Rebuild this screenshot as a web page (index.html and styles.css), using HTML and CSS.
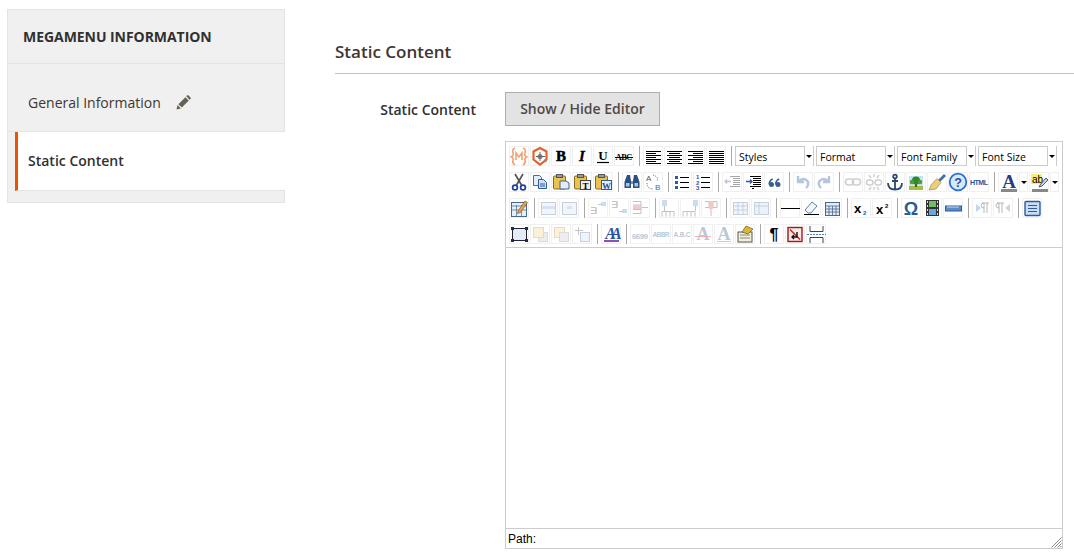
FILE: index.html
```html
<!DOCTYPE html>
<html lang="en">
<head>
    <meta charset="UTF-8">
    <title>Megamenu Information</title>
    <link rel="stylesheet" href="styles.css">
</head>
<body>
    <aside class="side">
        <h2 class="side-title">MEGAMENU INFORMATION</h2>
        <div class="side-item">
            General Information
            <svg class="pencil" viewBox="0 0 15 15"><path d="M0.5 14.500l1-4.400 3.400 3.400zM2.400 9.200l7-7 3.400 3.400-7 7zM10.300 1.300l1-1q.5-.4 1 0l2.400 2.400q.4.5 0 1l-1 1z" fill="#676056"/></svg>
        </div>
        <div class="side-item active">Static Content</div>
    </aside>

    <main class="main">
        <h3 class="section-title">Static Content</h3>
        <div class="field">
            <label class="field-label">Static Content</label>
            <div class="field-body">
                <button class="toggle">Show / Hide Editor</button>
                <div class="editor">
                    <div class="toolbar">
                        <div class="row">
                            <span class="btn"><svg viewBox="0 0 20 20"><g fill="none" stroke="#f4a070" stroke-width="1.600"><path d="M6 2Q3 3 4 7T1.500 10.500Q5 12 4 14.500T6 19"/><path d="M14 2Q17 3 16 7T18.500 10.500Q15 12 16 14.500T14 19"/><path d="M7 14V7l3 4 3-4v7"/></g></svg></span>
                            <span class="btn"><svg viewBox="0 0 20 20"><path d="M10 2l6.500 3.500v8L10 18.500l-6.500-5v-8z" fill="#fff" stroke="#e2622a" stroke-width="2.200"/><circle cx="10" cy="10.500" r="2.600" fill="#8a8a8a"/><path d="M10 6v9M6 10.500h9" stroke="#666"/><path d="M14 13l3 1-1 3z" fill="#888"/></svg></span>
                            <span class="btn"><svg viewBox="0 0 20 20"><text x="10" y="15" class="t-serif b" font-size="15" stroke="#000" stroke-width=".5" text-anchor="middle">B</text></svg></span>
                            <span class="btn"><svg viewBox="0 0 20 20"><text x="10" y="15" class="t-serif b i" font-size="15" stroke="#000" stroke-width=".3" text-anchor="middle">I</text></svg></span>
                            <span class="btn"><svg viewBox="0 0 20 20"><text x="10" y="13.500" class="t-serif b" font-size="13" text-anchor="middle">U</text><path d="M4 16.500h12" stroke="#000" stroke-width="1.200"/></svg></span>
                            <span class="btn"><svg viewBox="0 0 20 20"><text x="10" y="14" class="t-serif b" font-size="8.500" text-anchor="middle" textLength="17">ABC</text><path d="M1 11.500h18" stroke="#000"/></svg></span>
                            <i class="sep"></i>
                            <span class="btn"><svg viewBox="0 0 20 20"><path class="ln" d="M3 5.500h15M3 7.500h10M3 9.500h15M3 11.500h10M3 13.500h15M3 15.500h10M3 17.500h15"/></svg></span>
                            <span class="btn"><svg viewBox="0 0 20 20"><path class="ln" d="M3 5.500h15M5 7.500h11M3 9.500h15M5 11.500h11M3 13.500h15M5 15.500h11M3 17.500h15"/></svg></span>
                            <span class="btn"><svg viewBox="0 0 20 20"><path class="ln" d="M3 5.500h15M8 7.500h10M3 9.500h15M8 11.500h10M3 13.500h15M8 15.500h10M3 17.500h15"/></svg></span>
                            <span class="btn"><svg viewBox="0 0 20 20"><path class="ln" d="M3 5.500h15M3 7.500h15M3 9.500h15M3 11.500h15M3 13.500h15M3 15.500h15M3 17.500h15"/></svg></span>
                            <i class="sep"></i>
                            <div class="selects">
                                <span class="select">Styles</span>
                                <span class="select">Format</span>
                                <span class="select">Font Family</span>
                                <span class="select">Font Size</span>
                            </div>
                        </div>

                        <div class="row">
                            <span class="btn"><svg viewBox="0 0 20 20"><path d="M6 2l6.500 11M14 2L7.500 13" stroke="#555" stroke-width="1.700"/><g fill="none" stroke="#22409a" stroke-width="1.700"><circle cx="6" cy="15.500" r="2.400"/><circle cx="14" cy="15.500" r="2.400"/></g></svg></span>
                            <span class="btn"><svg viewBox="0 0 20 20"><path d="M3.500 3.500h6l2 2v8h-8z" fill="#e4eefa" stroke="#3a6eb0"/><path d="M8.500 7.500h5l3 3v6h-8z" fill="#cfe0f6" stroke="#2c5c9e"/><path d="M10 12h5M10 14h5" stroke="#2c5c9e"/></svg></span>
                            <span class="btn"><svg viewBox="0 0 20 20"><rect x="2.500" y="4" width="12" height="13" rx="1" fill="#e8c350" stroke="#8a6a20"/><rect x="5.500" y="2.500" width="6" height="3" fill="#999" stroke="#555"/><path d="M9 9h6l3 2v6H9z" fill="#e4eefa" stroke="#48607e"/></svg></span>
                            <span class="btn"><svg viewBox="0 0 20 20"><rect x="2.500" y="4" width="12" height="13" rx="1" fill="#e8c350" stroke="#8a6a20"/><rect x="5.500" y="2.500" width="6" height="3" fill="#999" stroke="#555"/><rect x="8.500" y="8.500" width="10" height="9" fill="#eee" stroke="#444"/><text x="13.500" y="16.500" class="t-serif b" font-size="9" text-anchor="middle">T</text></svg></span>
                            <span class="btn"><svg viewBox="0 0 20 20"><rect x="2.500" y="4" width="12" height="13" rx="1" fill="#e8c350" stroke="#8a6a20"/><rect x="5.500" y="2.500" width="6" height="3" fill="#999" stroke="#555"/><rect x="8.500" y="8.500" width="10" height="9" fill="#e4eefa" stroke="#2c5c9e"/><text x="13.500" y="16.500" class="t-serif b" font-size="9" fill="#1c4ea0" text-anchor="middle">W</text></svg></span>
                            <i class="sep"></i>
                            <span class="btn"><svg viewBox="0 0 20 20"><g fill="#2a4f80"><path d="M5 3h3l1 6v7H2.500v-6z"/><path d="M15 3h-3l-1 6v7h6.500v-6z"/></g><path d="M9 9h2v3H9z" fill="#7a95b8"/><path d="M4 11h3.500v3.500H4zM12.500 11H16v3.500h-3.500z" fill="#a8c4e6"/></svg></span>
                            <span class="btn"><svg viewBox="0 0 20 20"><text x="3" y="9" class="t-sans" font-size="8" fill="#555">A</text><text x="12" y="18" class="t-sans" font-size="8" fill="#2a70c8">B</text><path d="M10 3q6 2 4 6M4 11q0 6 6 6" fill="none" stroke="#2a70c8" stroke-dasharray="1 1"/></svg></span>
                            <i class="sep"></i>
                            <span class="btn"><svg viewBox="0 0 20 20"><path class="ln" d="M8 5.500h9M8 10.500h9M8 15.500h9"/><path d="M3 4h3v3H3zM3 9h3v3H3zM3 14h3v3H3z" fill="#2c5c9e"/></svg></span>
                            <span class="btn"><svg viewBox="0 0 20 20"><path class="ln" d="M8 5.500h9M8 10.500h9M8 15.500h9"/><g class="t-sans b" font-size="6" fill="#2456a4"><text x="3" y="7">1</text><text x="3" y="12.500">2</text><text x="3" y="18">3</text></g></svg></span>
                            <i class="sep"></i>
                            <span class="btn off"><svg viewBox="0 0 20 20"><path class="ln" d="M8 4.500h10M11 6.500h7M11 8.500h7M11 10.500h7M11 12.500h7M8 14.500h10"/><path d="M9 9.500H3m2-2l-2 2 2 2" fill="none" stroke="#2c5c9e" stroke-width="1.300"/></svg></span>
                            <span class="btn"><svg viewBox="0 0 20 20"><path class="ln" d="M7 4.500h11M10 6.500h8M10 8.500h8M10 10.500h8M10 12.500h8M7 14.500h11M9 16.500h2"/><path d="M3 9.500h6m-2-2l2 2-2 2" fill="none" stroke="#2c5c9e" stroke-width="1.300"/></svg></span>
                            <span class="btn"><svg viewBox="0 0 20 20"><g fill="#3a6090"><circle cx="7.500" cy="12.500" r="2.500"/><circle cx="14" cy="12.500" r="2.500"/></g><path d="M5.200 12.500q0-4 3.500-5.500M11.700 12.500q0-4 3.500-5.500" fill="none" stroke="#3a6090" stroke-width="1.700"/></svg></span>
                            <i class="sep"></i>
                            <span class="btn off"><svg viewBox="0 0 20 20"><path d="M5 4v6h6M5 10q6-6 10 0 1 3-2 6" fill="none" stroke="#2c5c9e" stroke-width="2.400"/></svg></span>
                            <span class="btn off"><svg viewBox="0 0 20 20"><path d="M15 4v6H9M15 10q-6-6-10 0-1 3 2 6" fill="none" stroke="#2c5c9e" stroke-width="2.400"/></svg></span>
                            <i class="sep"></i>
                            <span class="btn off"><svg viewBox="0 0 20 20"><g fill="none" stroke="#777" stroke-width="1.600"><rect x="2.500" y="7" width="8" height="6" rx="3"/><rect x="9.500" y="7" width="8" height="6" rx="3"/></g></svg></span>
                            <span class="btn off"><svg viewBox="0 0 20 20"><g fill="none" stroke="#777" stroke-width="1.400"><rect x="2.500" y="8" width="6.500" height="5" rx="2.500"/><rect x="11" y="8" width="6.500" height="5" rx="2.500"/><path d="M10 2v3M10 15v3M5 3l2 3M15 3l-2 3M5 18l2-3M15 18l-2-3"/></g></svg></span>
                            <span class="btn"><svg viewBox="0 0 20 20"><g fill="none" stroke="#2c4a70" stroke-width="1.800"><circle cx="10" cy="4.500" r="1.800"/><path d="M10 6v11.500M7 9h6M3 11q0 6.500 7 6.500t7-6.500"/></g></svg></span>
                            <span class="btn"><svg viewBox="0 0 20 20"><rect x="3" y="4" width="14" height="14" fill="#c8e0f4"/><path d="M3 14h14v4H3z" fill="#a0c040"/><path d="M9 10h2v5H9z" fill="#6a4a20"/><circle cx="10" cy="8.500" r="4" fill="#2f8a2a"/><circle cx="14" cy="10" r="2.200" fill="#48a030"/><circle cx="6" cy="10" r="2.200" fill="#48a030"/></svg></span>
                            <span class="btn"><svg viewBox="0 0 20 20"><path d="M11 8l6-6 2 2-6 6z" fill="#3f6fa8"/><path d="M10 6.500l4 4L9 17l-7 1 2-5z" fill="#e8cf78" stroke="#a88a38" stroke-width=".7"/></svg></span>
                            <span class="btn"><svg viewBox="0 0 20 20"><circle cx="10" cy="10" r="8.300" fill="#d8e8fa" stroke="#2a70c8" stroke-width="1.800"/><text x="10" y="14.500" class="t-sans b" font-size="12.500" fill="#1c52a8" text-anchor="middle">?</text></svg></span>
                            <span class="btn"><svg viewBox="0 0 20 20"><text x="10" y="12.500" class="t-sans b" font-size="7" fill="#25559a" text-anchor="middle" textLength="18">HTML</text></svg></span>
                            <i class="sep"></i>
                            <span class="btn"><svg viewBox="0 0 20 20"><text x="11" y="16" class="t-serif b" font-size="19" fill="#1f3f80" text-anchor="middle">A</text><path d="M3 17h16v3H3z" fill="#888"/></svg></span>
                            <span class="arrow"></span>
                            <span class="btn"><svg viewBox="0 0 20 20"><rect x="2" y="2" width="11" height="10" fill="#f6ec78"/><text x="3" y="10.500" class="t-sans" font-size="10">ab</text><path d="M11 13l6-7 2 2-6 6-3 1z" fill="#c8d8ea" stroke="#556"/><path d="M3 17h16v3H3z" fill="#888"/></svg></span>
                            <span class="arrow"></span>
                        </div>

                        <div class="row">
                            <span class="btn"><svg viewBox="0 0 20 20"><rect x="2.500" y="4.500" width="15" height="14" fill="#e6eef8" stroke="#47688f"/><path d="M3 8h14M3 12h14M7.500 7v11M12.500 7v11" stroke="#47688f" stroke-width=".7"/><path d="M9 13l7-10 2.500 1.500-7 10-3 1z" fill="#e8a050" stroke="#7a5020" stroke-width=".6"/></svg></span>
                            <i class="sep"></i>
                            <span class="btn off"><svg viewBox="0 0 20 20"><rect x="3.500" y="4.500" width="14" height="12" fill="#dce6f2" stroke="#5a7ca4"/><path d="M4 8h13v3H4z" fill="#8fb0d8"/></svg></span>
                            <span class="btn off"><svg viewBox="0 0 20 20"><rect x="3.500" y="4.500" width="14" height="12" fill="#dce6f2" stroke="#5a7ca4"/><path d="M8 8h5v3H8z" fill="#8fb0d8"/></svg></span>
                            <i class="sep"></i>
                            <span class="btn off"><svg viewBox="0 0 20 20"><g fill="none" stroke="#555"><path d="M3 9.500h5v3H3M3 15.500h5v-3M8 9.500v6"/><path d="M10 6.500h3"/></g><rect x="13" y="4" width="5" height="4" fill="#6e9ed6"/></svg></span>
                            <span class="btn off"><svg viewBox="0 0 20 20"><g fill="none" stroke="#555"><path d="M3 3.500h5v3H3M3 9.500h5v-3M8 3.500v6"/><path d="M10 13.500h3"/></g><rect x="13" y="11" width="5" height="4" fill="#6e9ed6"/></svg></span>
                            <span class="btn off"><svg viewBox="0 0 20 20"><g fill="none" stroke="#555"><path d="M3 3.500h8v12H3M3 7h8M3 11.500h8"/><path d="M12 9.500h6"/></g><rect x="3" y="7.500" width="9" height="3.500" fill="#e86060"/></svg></span>
                            <i class="sep"></i>
                            <span class="btn off"><svg viewBox="0 0 20 20"><g fill="none" stroke="#555"><path d="M3 18.500v-5h12v5M7 13.500v5M11 13.500v5"/><path d="M5.500 8v5"/></g><rect x="3" y="2" width="5" height="6" fill="#6e9ed6"/></svg></span>
                            <span class="btn off"><svg viewBox="0 0 20 20"><g fill="none" stroke="#555"><path d="M3 18.500v-5h12v5M7 13.500v5M11 13.500v5"/><path d="M15.500 8v5"/></g><rect x="13" y="2" width="5" height="6" fill="#6e9ed6"/></svg></span>
                            <span class="btn off"><svg viewBox="0 0 20 20"><g fill="none" stroke="#555"><path d="M4 3.500h12v6H4M8 3.500v6M12 3.500v6M10 10v8"/></g><rect x="8" y="3" width="4" height="8" fill="#e86060"/></svg></span>
                            <i class="sep"></i>
                            <span class="btn off"><svg viewBox="0 0 20 20"><rect x="3.500" y="4.500" width="14" height="12" fill="#dce6f2" stroke="#5a7ca4"/><path d="M4 8h13M4 12h13M8 5v11M13 5v11" stroke="#5a7ca4"/></svg></span>
                            <span class="btn off"><svg viewBox="0 0 20 20"><rect x="3.500" y="4.500" width="14" height="12" fill="#c8dcf2" stroke="#5a7ca4"/><path d="M4 8h13M8 5v11" stroke="#5a7ca4"/></svg></span>
                            <i class="sep"></i>
                            <span class="btn"><svg viewBox="0 0 20 20"><path d="M1 10.500h19" stroke="#000" shape-rendering="crispEdges"/></svg></span>
                            <span class="btn"><svg viewBox="0 0 20 20"><path d="M4 12l7-8 5 4-6 7H7z" fill="#f2f6fb" stroke="#5a7ca4"/><path d="M3 16.500h15" stroke="#000"/></svg></span>
                            <span class="btn"><svg viewBox="0 0 20 20"><rect x="3.500" y="4.500" width="14" height="13" fill="#e4ecf6" stroke="#47688f"/><path d="M4 8h13M4 11h13M4 14h13M7 8v9M10.500 8v9M14 8v9" stroke="#47688f" stroke-width=".8"/></svg></span>
                            <i class="sep"></i>
                            <span class="btn"><svg viewBox="0 0 20 20"><text x="3" y="14.500" class="t-sans b" font-size="13">x</text><text x="12" y="17" class="t-sans b" font-size="6" fill="#2456a4">2</text></svg></span>
                            <span class="btn"><svg viewBox="0 0 20 20"><text x="4" y="16" class="t-sans b" font-size="13">x</text><text x="13" y="9.500" class="t-sans b" font-size="6">2</text></svg></span>
                            <i class="sep"></i>
                            <span class="btn"><svg viewBox="0 0 20 20"><text x="10" y="16.500" class="t-sans b" font-size="18" fill="#2a5c96" text-anchor="middle">Ω</text></svg></span>
                            <span class="btn"><svg viewBox="0 0 20 20"><rect x="4" y="2" width="13" height="16" fill="#333"/><path d="M7 3h7v6H7z" fill="#6cc060"/><path d="M7 11h7v6H7z" fill="#68a8e0"/><path d="M5 3h1v2H5zM5 7h1v2H5zM5 11h1v2H5zM5 15h1v2H5zM15 3h1v2h-1zM15 7h1v2h-1zM15 11h1v2h-1zM15 15h1v2h-1z" fill="#ddd"/></svg></span>
                            <span class="btn"><svg viewBox="0 0 20 20"><rect x="2.500" y="8" width="16" height="5" fill="#5a8cc8" stroke="#2c5c9e"/><path d="M4 9h12" stroke="#c8dcf2"/></svg></span>
                            <i class="sep"></i>
                            <span class="btn off"><svg viewBox="0 0 20 20"><path d="M4 6l5 4-5 4z" fill="#5a8cc8"/><path d="M10 5h7M12 5v10M15 5v10M12 5q-3 0-3 2.500t3 2.500" fill="none" stroke="#333"/></svg></span>
                            <span class="btn off"><svg viewBox="0 0 20 20"><path d="M17 6l-5 4 5 4z" fill="#5a8cc8"/><path d="M4 5h7M6 5v10M9 5v10M6 5q-3 0-3 2.500t3 2.500" fill="none" stroke="#333"/></svg></span>
                            <i class="sep"></i>
                            <span class="btn"><svg viewBox="0 0 20 20"><rect x="3" y="3.500" width="15" height="14" rx="1" fill="#c8dcf4" stroke="#2c5c9e" stroke-width="1.400"/><path d="M6 7.500h9M6 10.500h9M6 13.500h9" stroke="#2c5c9e"/></svg></span>
                        </div>

                        <div class="row">
                            <span class="btn"><svg viewBox="0 0 20 20"><rect x="3.500" y="4.500" width="14" height="12" fill="#e4ecf8" stroke="#223"/><path d="M2 3h3v3H2zM16 3h3v3h-3zM2 15h3v3H2zM16 15h3v3h-3z" fill="#1d2c50"/></svg></span>
                            <span class="btn off"><svg viewBox="0 0 20 20"><rect x="8.500" y="8.500" width="9" height="9" fill="#ccc" stroke="#999"/><rect x="3.500" y="3.500" width="10" height="10" fill="#f4d890" stroke="#b89a50"/></svg></span>
                            <span class="btn off"><svg viewBox="0 0 20 20"><rect x="3.500" y="3.500" width="10" height="10" fill="#f4d890" stroke="#b89a50"/><rect x="8.500" y="8.500" width="9" height="9" fill="#ccc" stroke="#999"/></svg></span>
                            <span class="btn off"><svg viewBox="0 0 20 20"><rect x="8.500" y="8.500" width="9" height="9" fill="#cfe0f6" stroke="#5a7ca4"/><path d="M6.500 3v8M3 6.500h8" stroke="#555"/></svg></span>
                            <i class="sep"></i>
                            <span class="btn"><svg viewBox="0 0 20 20"><text x="10" y="15" class="t-serif b i" font-size="16" letter-spacing="-5" fill="#2456a4" text-anchor="middle">AA</text><path d="M3 17h15" stroke="#6a2aa0" stroke-width="1.600"/></svg></span>
                            <i class="sep"></i>
                            <span class="btn off"><svg viewBox="0 0 20 20"><text x="10" y="15" class="t-sans b" font-size="8" fill="#3a6090" text-anchor="middle" textLength="16">6699</text></svg></span>
                            <span class="btn off"><svg viewBox="0 0 20 20"><text x="10" y="13" class="t-sans b" font-size="6.500" fill="#3a6090" text-anchor="middle" textLength="17">ABBR</text></svg></span>
                            <span class="btn off"><svg viewBox="0 0 20 20"><text x="10" y="13" class="t-sans b" font-size="6.500" fill="#3a6090" text-anchor="middle" textLength="17">A.B.C</text></svg></span>
                            <span class="btn off"><svg viewBox="0 0 20 20"><text x="10" y="16" class="t-serif b" font-size="18" fill="#3a6090" text-anchor="middle">A</text><path d="M2 12.500h16" stroke="#e02020"/></svg></span>
                            <span class="btn off"><svg viewBox="0 0 20 20"><text x="10" y="16" class="t-serif b" font-size="18" fill="#3a6090" text-anchor="middle">A</text><path d="M3 17.500h14" stroke="#20a020"/></svg></span>
                            <span class="btn"><svg viewBox="0 0 20 20"><rect x="3" y="8" width="14" height="10" fill="#f4efd8" stroke="#555"/><path d="M5 11h10M5 14h10" stroke="#888"/><path d="M7 8l4-6 7 3-5 5z" fill="#d8b838" stroke="#6a5a20" stroke-width=".7"/></svg></span>
                            <i class="sep"></i>
                            <span class="btn"><svg viewBox="0 0 20 20"><text x="10" y="16" class="t-sans b" font-size="16" text-anchor="middle">¶</text></svg></span>
                            <span class="btn"><svg viewBox="0 0 20 20"><rect x="3" y="3.500" width="14" height="14" fill="#f8e8e8" stroke="#a01818" stroke-width="1.400"/><path d="M5 5.500l10 10" stroke="#c02020" stroke-width="1.400"/><path d="M12 8v5H7m2-2l-2 2 2 2" fill="none" stroke="#111" stroke-width="1.400"/></svg></span>
                            <span class="btn"><svg viewBox="0 0 20 20"><path d="M4 2v5.500h13V2M4 19v-5.500h13V19" fill="none" stroke="#444"/><path d="M1 10.500h19" stroke="#4a7cc0" stroke-dasharray="2 1"/></svg></span>
                        </div>
                    </div>
                    <div class="canvas"></div>
                    <div class="status">
                        Path:
                        <svg class="grip" viewBox="0 0 12 12"><path d="M11.500 1.500l-10 10M11.500 4.500l-7 7M11.500 7.500l-4 4M11.500 10l-1.500 1.500" stroke="#888" fill="none"/></svg>
                    </div>
                </div>
            </div>
        </div>
    </main>
</body>
</html>
```

FILE: styles.css
```css
* {
    box-sizing: border-box;
}
body {
    font-family: "Open Sans", sans-serif;
    color: #303030;
    background: #fff;
    margin: 0;
    display: flex;
    align-items: flex-start;
}
.side {
    width: 278px;
    margin: 9px 0 0 7px;
    padding-bottom: 11px;
    background: #f0f0f0;
    border: 1px solid #e3e3e3;
    flex-shrink: 0;
}
.side-title {
    margin: 0;
    height: 54px;
    padding-left: 15px;
    font-size: 14px;
    font-weight: 700;
    letter-spacing: -.05px;
    line-height: 53px;
    border-bottom: 1px solid #e3e3e3;
}
.side-item {
    display: flex;
    align-items: center;
    height: 68px;
    padding: 9px 0 0 20px;
    font-size: 14px;
    color: #41362f;
    border-bottom: 1px solid #e3e3e3;
}
.pencil {
    width: 15px;
    height: 15px;
    margin-left: 15px;
}
.side-item.active {
    height: 59px;
    margin: 0 -1px 0 7px;
    padding: 0 0 2px 10px;
    font-weight: 600;
    color: #303030;
    background: #fff;
    border-left: 3px solid #eb5202;
    border-bottom: 1px solid #e3e3e3;
}
.main {
    width: 739px;
    margin-left: 50px;
    padding-top: 41px;
    flex-shrink: 0;
}
.section-title {
    margin: 0;
    height: 33px;
    font-size: 17px;
    font-weight: 600;
    line-height: 21px;
    color: #41362f;
    border-bottom: 1px solid #cac3b4;
}
.field {
    display: flex;
    margin-top: 18px;
}
.field-label {
    width: 141px;
    padding-top: 8px;
    text-align: right;
    font-size: 14px;
    font-weight: 600;
    color: #303030;
}
.field-body {
    margin-left: 29px;
}
.toggle {
    display: block;
    width: 155px;
    height: 34px;
    padding: 0 0 2px;
    font-family: inherit;
    font-size: 14px;
    font-weight: 600;
    color: #514943;
    background: #e3e3e3;
    border: 1px solid #adadad;
}
.editor {
    width: 558px;
    height: 408px;
    margin-top: 15px;
    display: flex;
    flex-direction: column;
    border: 1px solid #ccc;
}
.toolbar {
    height: 106px;
    padding: 4px 0 0 3px;
    border-bottom: 1px solid #ccc;
    flex-shrink: 0;
}
.row {
    display: flex;
    gap: 1px;
    height: 20px;
    margin-bottom: 6px;
}
.btn {
    width: 20px;
    height: 20px;
    flex-shrink: 0;
    box-shadow: inset 0 0 0 1px #f0f0f0;
}
.btn svg {
    display: block;
    width: 20px;
    height: 20px;
}
.btn.off svg {
    opacity: .35;
}
.sep {
    width: 1px;
    height: 20px;
    margin: 0 2px 0 4px;
    background: #a8a8a8;
}
.ln {
    stroke: #000;
    fill: none;
    shape-rendering: crispEdges;
}
.t-serif {
    font-family: "Liberation Serif", serif;
}
.t-sans {
    font-family: "Liberation Sans", sans-serif;
}
.b {
    font-weight: 700;
}
.i {
    font-style: italic;
}
.arrow {
    width: 9px;
    height: 20px;
    position: relative;
    box-shadow: inset 0 0 0 1px #f0f0f0;
}
.arrow::after {
    content: "";
    position: absolute;
    left: 2px;
    top: 9px;
    border: 3px solid transparent;
    border-top: 3px solid #000;
    border-bottom: 0;
}
.selects {
    display: flex;
    gap: 2px;
}
.select {
    position: relative;
    width: 79px;
    height: 20px;
    padding-left: 3px;
    font-size: 10.5px;
    line-height: 20px;
    color: #000;
    border: 1px solid #ccc;
}
.select::before {
    content: "";
    position: absolute;
    top: -1px;
    right: 0;
    width: 8px;
    height: 20px;
    background: #fff;
    border-left: 1px solid #ccc;
}
.select::after {
    content: "";
    position: absolute;
    right: 1px;
    top: 8px;
    border: 3px solid transparent;
    border-top: 3px solid #000;
    border-bottom: 0;
}
.canvas {
    flex: 1;
}
.status {
    position: relative;
    height: 20px;
    padding-left: 2px;
    font-family: "Liberation Sans", sans-serif;
    font-size: 12px;
    line-height: 20px;
    color: #000;
    border-top: 1px solid #ccc;
}
.grip {
    position: absolute;
    right: 0;
    bottom: 0;
    width: 12px;
    height: 12px;
}
```
